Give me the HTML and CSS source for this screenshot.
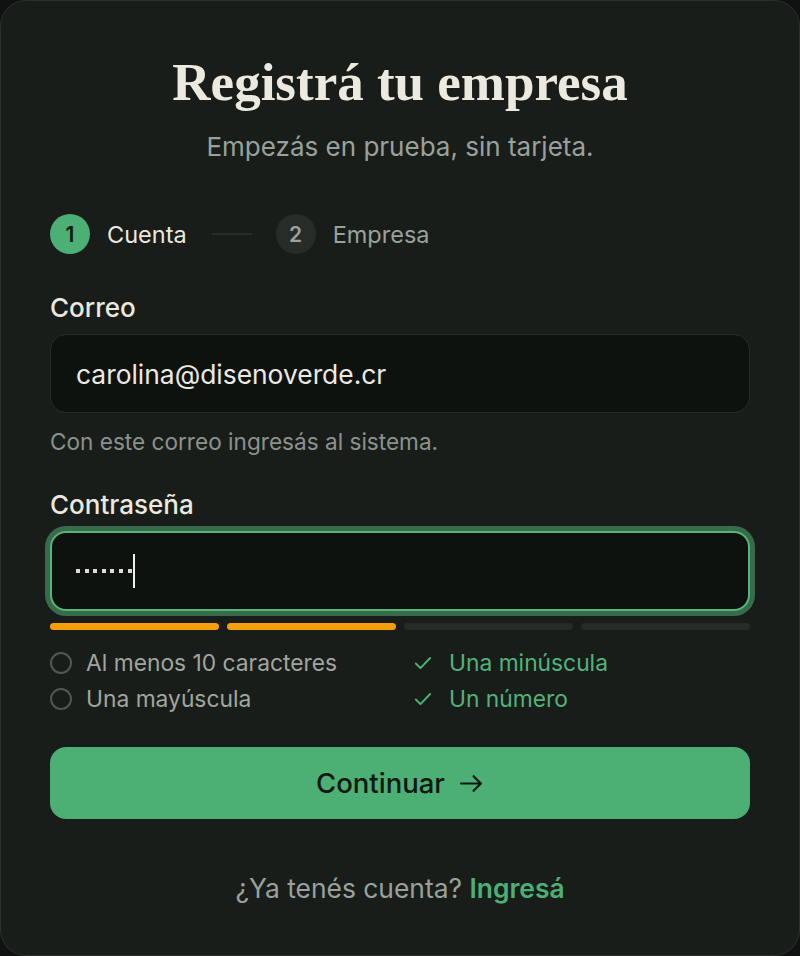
FILE: index.html
```html
<!DOCTYPE html>
<html lang="es">
<head>
<meta charset="utf-8">
<title>Registrá tu empresa</title>
<link rel="stylesheet" href="styles.css">
</head>
<body>
<main class="card">
  <h1 class="title">Registrá tu empresa</h1>
  <p class="subtitle">Empezás en prueba, sin tarjeta.</p>

  <ol class="stepper">
    <li class="step step-active"><span class="step-num">1</span><span class="step-label">Cuenta</span></li>
    <li class="step-line" aria-hidden="true"></li>
    <li class="step"><span class="step-num">2</span><span class="step-label">Empresa</span></li>
  </ol>

  <div class="field">
    <label class="label">Correo</label>
    <div class="input"><span class="input-text">carolina@disenoverde.cr</span></div>
    <p class="help">Con este correo ingresás al sistema.</p>
  </div>

  <div class="field field-pass">
    <label class="label">Contraseña</label>
    <div class="input input-focus">
      <span class="dots"><i class="dot"></i><i class="dot"></i><i class="dot"></i><i class="dot"></i><i class="dot"></i><i class="dot"></i><i class="dot"></i></span><span class="caret"></span>
    </div>
    <div class="strength">
      <span class="seg seg-on"></span><span class="seg seg-on"></span><span class="seg"></span><span class="seg"></span>
    </div>
    <ul class="reqs">
      <li class="req"><span class="ring"></span>Al menos 10 caracteres</li>
      <li class="req req-ok"><svg class="check" viewBox="0 0 20 20"><path d="M3.5 10.5l4.2 4.2L16.5 5.5"/></svg>Una minúscula</li>
      <li class="req"><span class="ring"></span>Una mayúscula</li>
      <li class="req req-ok"><svg class="check" viewBox="0 0 20 20"><path d="M3.5 10.5l4.2 4.2L16.5 5.5"/></svg>Un número</li>
    </ul>
  </div>

  <button class="btn">Continuar <svg class="arrow" viewBox="0 0 24 24"><path d="M2 12h19M14 5l7 7-7 7"/></svg></button>

  <p class="footer">¿Ya tenés cuenta? <a class="link" href="#">Ingresá</a></p>
</main>
</body>
</html>
```

FILE: styles.css
```css
* { box-sizing: border-box; }
html, body { margin: 0; padding: 0; }
body {
  background: #0f1210;
  font-family: Inter, "Noto Sans", sans-serif;
  color: #ebe9df;
}
.card {
  width: 800px;
  height: 956px;
  border: 1px solid #2b312d;
  border-radius: 26px;
  background: #181d1a;
  padding: 51px 49px 0;
  display: flex;
  flex-direction: column;
}
.title {
  margin: 0;
  font-family: "Liberation Serif", "Times New Roman", serif;
  font-weight: 700;
  font-size: 53px;
  line-height: 60px;
  text-align: center;
  color: #ece9df;
}
.subtitle {
  margin: 19px 0 0;
  font-size: 26px;
  line-height: 32px;
  text-align: center;
  color: #9aa19c;
}
.stepper {
  list-style: none;
  margin: 51px 0 0;
  padding: 0;
  display: flex;
  align-items: center;
  height: 40px;
}
.step {
  display: flex;
  align-items: center;
  gap: 17px;
}
.step-num {
  width: 40px;
  height: 40px;
  border-radius: 50%;
  background: #272c29;
  color: #9aa19c;
  font-size: 21px;
  font-weight: 600;
  display: flex;
  align-items: center;
  justify-content: center;
}
.step-label {
  font-size: 23.5px;
  color: #9aa19c;
}
.step-active .step-num {
  background: #4caf74;
  color: #0f1712;
}
.step-active .step-label { color: #ebe9df; }
.step-line {
  width: 40px;
  height: 2px;
  background: #262c28;
  margin: 0 24px 0 25px;
}
.field { display: flex; flex-direction: column; }
.label {
  margin-top: 38px;
  font-size: 26px;
  line-height: 32px;
  font-weight: 500;
  color: #ebe9df;
}
.field-pass .label { margin-top: 33px; }
.input {
  margin-top: 10px;
  height: 79px;
  border: 1px solid #262c28;
  border-radius: 16px;
  background: #0e120f;
  padding: 0 25px;
  display: flex;
  align-items: center;
}
.input-text {
  font-size: 26.4px;
  line-height: 32px;
  color: #ece9e2;
}
.input-focus {
  height: 80px;
  border: 2px solid #55b67c;
  box-shadow: 0 0 0 5px #386b4a;
  padding: 0 24px;
}
.dots { display: flex; gap: 4.6px; }
.dot {
  display: block;
  width: 4px;
  height: 4px;
  background: #dcdcd4;
}
.caret {
  display: block;
  width: 2px;
  height: 34px;
  background: #f0f0ea;
  margin-left: 1px;
}
.help {
  margin: 15px 0 0;
  font-size: 22.6px;
  line-height: 28px;
  color: #8b928d;
}
.strength {
  margin-top: 12px;
  display: grid;
  grid-template-columns: repeat(4, 1fr);
  gap: 8px;
}
.seg {
  height: 7px;
  border-radius: 4px;
  background: #262b28;
}
.seg-on { background: #f59e0b; }
.reqs {
  list-style: none;
  margin: 15px 0 0;
  padding: 0;
  display: grid;
  grid-template-columns: 1fr 1fr;
  column-gap: 28px;
}
.req {
  display: flex;
  align-items: center;
  gap: 14px;
  font-size: 22.8px;
  line-height: 36px;
  color: #a0a69f;
}
.ring {
  width: 22px;
  height: 22px;
  border: 2px solid #505752;
  border-radius: 50%;
  flex: none;
}
.req-ok { color: #52b27a; }
.req-ok .check { margin-left: -2px; margin-right: 1px; }
.check {
  width: 22px;
  height: 22px;
  flex: none;
  fill: none;
  stroke: #4caf74;
  stroke-width: 1.8;
  stroke-linecap: round;
  stroke-linejoin: round;
}
.btn {
  margin-top: 30px;
  height: 72px;
  border: 0;
  border-radius: 16px;
  background: #4caf74;
  color: #0f1712;
  font-family: Inter, "Noto Sans", sans-serif;
  font-size: 27.5px;
  font-weight: 500;
  display: flex;
  align-items: center;
  justify-content: center;
  gap: 14px;
}
.arrow {
  width: 25px;
  height: 25px;
  fill: none;
  stroke: #0f1712;
  stroke-width: 2.1;
  stroke-linecap: round;
  stroke-linejoin: round;
}
.footer {
  margin: 53px 0 0;
  font-size: 26.4px;
  line-height: 32px;
  text-align: center;
  color: #9aa19c;
}
.link {
  color: #4caf74;
  font-weight: 600;
  text-decoration: none;
}
```
